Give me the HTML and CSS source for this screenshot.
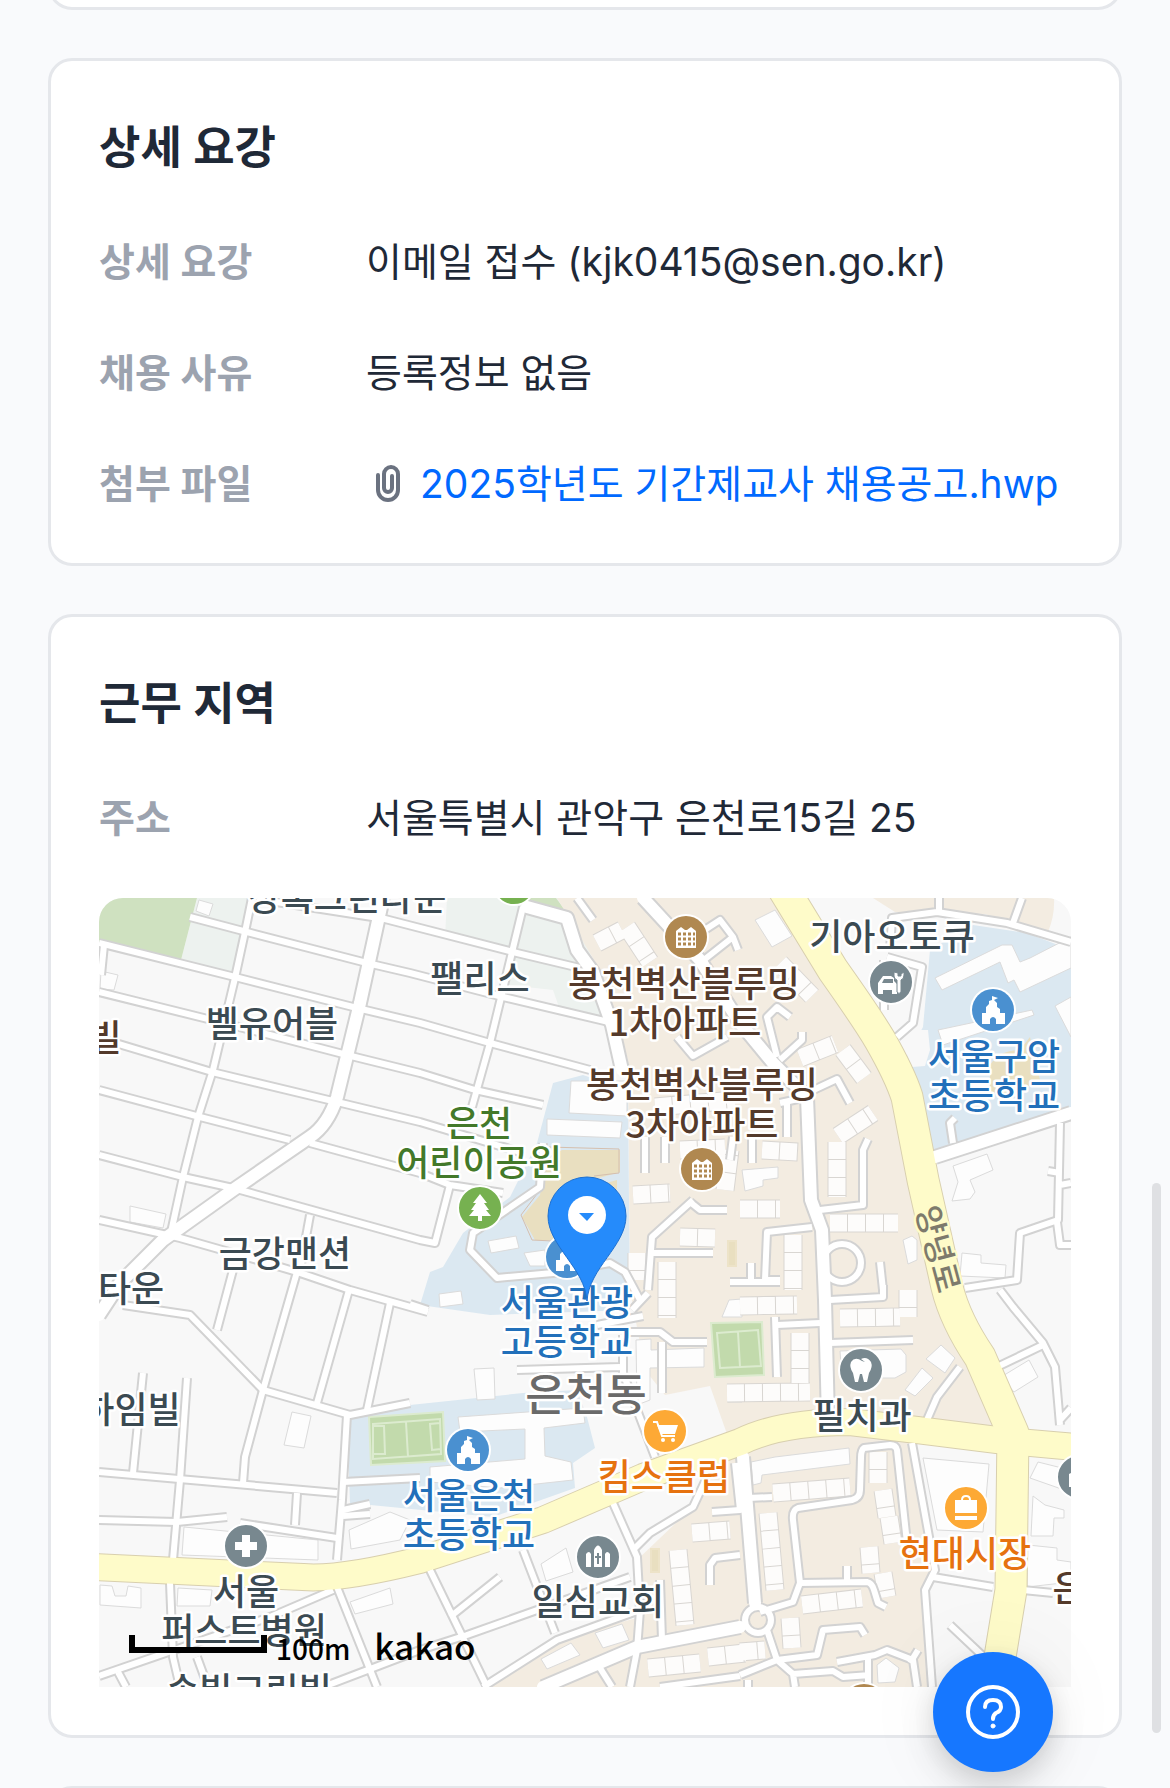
FILE: index.html
```html
<!DOCTYPE html>
<html lang="ko">
<head>
  <meta charset="UTF-8">
  <meta name="viewport" content="width=device-width, initial-scale=1">
  <title>채용 공고</title>
  <link rel="stylesheet" href="styles.css">
</head>
<body>
  <main class="page">
    <section class="card card-prev"></section>

    <section class="card">
      <h2>상세 요강</h2>
      <dl>
        <div class="row">
          <dt>상세 요강</dt>
          <dd>이메일 접수 (kjk0415@sen.go.kr)</dd>
        </div>
        <div class="row">
          <dt>채용 사유</dt>
          <dd>등록정보 없음</dd>
        </div>
        <div class="row">
          <dt>첨부 파일</dt>
          <dd class="file">
            <svg class="clip" viewBox="0 0 24 37" aria-hidden="true">
              <path d="M2 10V25a10 10 0 0 0 20 0V9a7 7 0 0 0-14 0V23a4 4 0 0 0 8 0V11"/>
            </svg>
            <a href="#file">2025학년도 기간제교사 채용공고.hwp</a>
          </dd>
        </div>
      </dl>
    </section>

    <section class="card">
      <h2>근무 지역</h2>
      <dl>
        <div class="row">
          <dt>주소</dt>
          <dd>서울특별시 관악구 은천로15길 25</dd>
        </div>
      </dl>
      <div class="map">
        <svg class="map-canvas" viewBox="99 898 972 789" preserveAspectRatio="xMidYMid slice" role="img" aria-label="지도">
          <defs>
            <!-- residential lanes -->
            <g id="lanes">
              <path d="M257 899L385 919 420 928 517 953 580 968"/>
              <path d="M190 917L247 932 367 963 410 973 503 997 613 1023"/>
              <path d="M99 943L235 977 357 1008 420 1023 490 1043 590 1070"/>
              <path d="M99 992L220 1022 347 1055 420 1073 475 1090 543 1105"/>
              <path d="M99 1038L212 1072 337 1102 420 1122 523 1153"/>
              <path d="M99 1090L200 1117 290 1140M310 1143L420 1173 450 1185 503 1193"/>
              <path d="M99 1155L183 1177 233 1188 420 1240 435 1243 450 1185"/>
              <path d="M99 1220L167 1235 180 1238 257 1260 297 1272 350 1290 428 1312"/>
              <path d="M104 945L101 975"/>
              <path d="M252 898L245 932 235 978 213 1070 198 1117 183 1177 170 1237"/>
              <path d="M523 907L490 1043 472 1107"/>
              <path d="M310 1215L300 1270"/>
              <path d="M123 1305L190 1315 263 1390 350 1415 410 1403"/>
              <path d="M233 1270L217 1330M297 1272L263 1390 245 1457 243 1483"/>
              <path d="M349 1290L317 1403M390 1303L367 1410"/>
              <path d="M347 1415L342 1500 337 1560"/>
              <path d="M187 1378L180 1480 173 1560M143 1373L133 1473"/>
              <path d="M99 1472L337 1493M343 1482L420 1478M99 1520L177 1522 227 1517"/>
              <path d="M240 1523L337 1538M297 1493L295 1525M343 1510L370 1504M343 1516L370 1514"/>
              <path d="M170 1583L173 1657 180 1687M337 1587L377 1687M333 1590L270 1617 99 1676"/>
              <path d="M197 1657L208 1687M118 1672L126 1687M323 1687L420 1650 467 1635 630 1577"/>
              <path d="M430 1570L487 1687M523 1550L555 1633M450 1617L500 1577"/>
              <path d="M483 1687L557 1640 640 1610"/>
              <path d="M543 1143L540 1187 473 1233 470 1250 497 1278 553 1273 610 1263 625 1272 640 1300"/>
              <path d="M410 1304L428 1310M517 1370L620 1367M623 1335L623 1373 655 1457"/>
              <path d="M613 1503L637 1557 640 1610 637 1650 630 1687"/>
              <path d="M633 1550L650 1533 693 1507 707 1477M712 1512L740 1510 735 1463"/>
              <path d="M710 1585L710 1565 715 1558 740 1555M660 1580L662 1640"/>
              <path d="M595 1660L612 1687M660 1687L740 1676"/>
              <path d="M630 1332L660 1332 673 1342 707 1342M662 1342L662 1393M597 1325L643 1316 M632 1310L648 1293"/>
              <path d="M693 1200L652 1237 648 1290M690 1202L700 1210 727 1210M650 1253L713 1253M730 1282L780 1282"/>
              <path d="M677 1037L693 1056 727 1037M700 963L733 937 720 920 700 933M577 898L593 920M733 937L738 950"/>
              <path d="M645 1137L645 1173M665 1137L665 1163M733 1137L730 1160M787 1103L787 1137M752 1137L752 1163M780 1103L807 1097"/>
              <path d="M780 1060L802 1040 802 1032M777 1057L767 1017 777 1007 790 1017M807 1093L837 1079 850 1103"/>
              <path d="M820 1210L863 1205 863 1150 868 1139M812 1227L767 1232 765 1280 780 1280M751 1280L751 1263"/>
              <path d="M830 1343L913 1340M775 1317L777 1377M777 1325L820 1323M830 1300L883 1297 883 1285M880 1262L883 1290"/>
              <circle cx="842" cy="1263" r="19"/>
              <path d="M907 1543L897 1450Q896 1445 890 1445L864 1448Q861 1450 861 1458L860 1490Q860 1498 852 1500L798 1508Q792 1510 793 1520L800 1583 867 1582Q872 1583 874 1590L878 1603 886 1607"/>
              <path d="M800 1583L793 1602 760 1612M847 1582L847 1566M748 1498L772 1497"/>
              <circle cx="758" cy="1620" r="13"/>
              <path d="M767 1630L777 1660 817 1655 823 1630 860 1627 865 1635M777 1660L793 1674 833 1671 843 1677 870 1675M837 1662L875 1655 887 1650 913 1660 917 1687M777 1660L740 1675M868 1657L868 1687M910 1663L918 1650M793 1674L795 1687M748 1680L748 1687"/>
              <path d="M912 1443L935 1570 925 1590 932 1687M933 1577L993 1587M1023 1590L1053 1593M950 1625L987 1660"/>
              <path d="M1060 1123L1058 1220 1020 1233 1017 1280 965 1288M1057 1222L1060 1245 1071 1245M1060 1185L1071 1183M1048 1171L1060 1173"/>
              <path d="M890 950L892 918 937 912 1007 923 1071 942M939 914L939 898M1013 923L1022 898M887 957L922 967 913 1023 897 1037M884 1010L884 960"/>
              <path d="M953 1143L950 1123 955 1118M1000 1290L1013 1307 1043 1343 1055 1367 1060 1425M1043 1345L997 1367M1060 1420L1071 1408M927 1420L937 1397 960 1367"/>
            </g>
            <!-- wider streets -->
            <g id="streets">
              <path d="M383 898L360 1003 337 1097Q328 1125 310 1137L233 1190 163 1240 120 1283 99 1315"/>
              <path d="M527 907L567 918 577 950 593 972 612 1025 622 1070"/>
              <path d="M643 898L700 960 740 1023 773 1063 807 1097 811 1200 822 1230 825 1300 828 1420"/>
              <path d="M935 1157L1071 1113M743 1457L755 1603M543 1687L637 1647 740 1627"/>
            </g>
            <path id="avenue" d="M783 888L833 970Q867 1018 880 1040 900 1075 907 1097L923 1180 947 1287Q955 1320 980 1357L1013 1433 1011 1590 1000 1657 997 1690"/>
            <path id="crossroad" d="M95 1567L303 1577Q340 1580 420 1560L543 1520 643 1477 740 1442Q780 1422 850 1422L917 1430 997 1440 1075 1447"/>
            <!-- terraced houses, split by the dash pattern -->
            <g id="rows">
              <path d="M837 1142L837 1197M838 1136L873 1113M830 1223L898 1223M740 1209L780 1209M793 1235L793 1290"/>
              <path d="M740 1306L797 1305M840 1318L900 1317M800 1333L800 1383M727 1393L810 1392M773 1493L850 1487"/>
              <path d="M878 1452L878 1483M883 1490L887 1517M889 1517L893 1543M768 1513L775 1590M802 1605L862 1598"/>
              <path d="M869 1547L871 1573M883 1573L887 1597M790 1618L792 1648M740 1652L765 1650M692 1533L730 1530"/>
              <path d="M678 1550L685 1625M648 1668L700 1663M708 1657L745 1653M597 943L622 930M627 927L650 962"/>
              <path d="M633 1195L670 1193M680 1237L715 1238M637 1253L637 1280M667 1262L667 1318M800 1058L835 1044"/>
              <path d="M843 1050L864 1078M780 963L812 996M762 1150L798 1152M680 1150L725 1148M655 1107L735 1100M908 1290L908 1317M725 1190L730 1150"/>
            </g>
            <g id="school">
              <circle r="23" fill="#fff"/><circle r="21" fill="#4a90d0"/>
              <path d="M-11 14V3H-7V-3L-4-6V-9L-1-10V-14L5-12 1-10 4-7V-3L7-1V3H12V14H3V9Q0 5-3 9V14Z" fill="#fff"/>
            </g>
            <g id="apt">
              <circle r="23" fill="#fff"/><circle r="21" fill="#b08850"/>
              <path d="M-10 11V-6L-5-10-1-7 1-7 5-10 10-6V11Z" fill="#fff"/>
              <path d="M-8-3H9M-8 2H9M-8 7H9" stroke="#b08850" stroke-width="3" stroke-dasharray="3 2"/>
            </g>
          </defs>

          <rect x="99" y="898" width="972" height="789" fill="#f8f8f8"/>

          <!-- land use -->
          <g class="pale">
            <path d="M197 898H252L235 977 181 960Z"/>
            <path d="M447 898H570L615 1020 560 1010 553 990 508 985 515 955 445 938Z"/>
          </g>
          <path d="M99 898H197L181 960 99 942ZM527 898H556L568 914 530 905Z" fill="#cfe1c0"/>
          <g class="beige">
            <path d="M557 898H785L880 1040 925 1190 990 1370 1005 1430 925 1425 790 1420 727 1434 710 1386 665 1395 645 1370 630 1290 628 1060 600 970Z"/>
            <path d="M740 1442L850 1425 915 1435 935 1570 925 1600 932 1687H487L560 1638 637 1618V1560L700 1500 706 1465Z"/>
            <path d="M873 898H1054Q1055 915 1048 932L985 914 895 912Z"/>
          </g>
          <g class="campus">
            <path d="M553 1083L583 1075 628 1090 630 1310 490 1315 420 1305 430 1272 443 1267 463 1233 510 1197 537 1143Z"/>
            <path d="M347 1417L410 1405 523 1393 577 1390 587 1417 595 1448 573 1463 575 1488 493 1517 350 1503Z"/>
            <path d="M930 950L973 925 1027 933 1071 950V1110L932 1150 920 1097 903 1063 923 1027Z"/>
          </g>
          <path d="M903 1045L915 1030 928 1030 930 1050 925 1066 912 1067Z" fill="#f8f8f8"/>

          <!-- sports grounds -->
          <path d="M562 1150H620V1172L592 1180V1187L617 1180V1240H535L522 1217 540 1195 545 1160Z" fill="#e9dfc0"/>
          <path d="M548 1147L619 1149V1173L594 1176M540 1190L521 1215 532 1240 553 1241" class="fence"/>
          <g class="pitch">
            <path d="M369 1417L443 1412 445 1461 371 1465Z"/>
            <path d="M373 1424L440 1419 441 1454 373 1459ZM406 1422L408 1457M373 1426H384L385 1454H374M440 1423L430 1424 432 1450 441 1449"/>
            <path d="M711 1323L762 1322 764 1375 715 1377Z"/>
            <path d="M717 1333L758 1330 761 1366 720 1368ZM738 1332L740 1367"/>
          </g>
          <path d="M990 1065Q1000 1050 1020 1050L1030 1037 1040 1080 1010 1095 990 1092Z" fill="#e9dfc0"/>
          <path d="M651 1549H659V1572H651ZM728 1241H736V1266H728Z" class="court"/>

          <!-- buildings -->
          <g class="buildings">
            <path d="M571 1081H627V1116L569 1113ZM547 1119L622 1122 620 1138 547 1135ZM488 1241L516 1236 519 1248 491 1253ZM524 1253L545 1250V1266H530Z"/>
            <path d="M439 1294L461 1291 463 1304 440 1307ZM474 1369L494 1368 495 1399 477 1400Z"/>
            <path d="M458 1417L583 1408 585 1423 544 1428 545 1456 571 1462 573 1480 500 1488 430 1482 430 1467 525 1459V1429L460 1432Z"/>
            <path d="M636 1340L651 1339V1350L704 1348V1367L650 1368V1400L637 1405Z"/>
            <path d="M292 1412L311 1416 304 1448 284 1445ZM184 1527L318 1540V1560L182 1555ZM349 1530L390 1512 410 1520 400 1540 351 1549Z"/>
            <path d="M130 1206L166 1214 163 1228 130 1222ZM100 1585L112 1586 115 1596H126L128 1586 141 1588V1608L100 1605ZM178 1588L212 1590 210 1606H177ZM350 1602L390 1588 393 1604 355 1614Z"/>
            <path d="M199 900L213 904 209 916 196 911ZM101 971L118 975 114 990 100 989ZM541 1564L566 1548 573 1572 546 1581ZM541 1659L571 1643 580 1655 547 1669ZM595 1633L622 1624 629 1640 603 1648Z"/>
            <path d="M935 978L1002 945 1012 945 1020 962 1030 958 1071 937V968L1020 992 1014 980 1008 983 1000 962 942 990ZM938 1030L1032 1010 1034 1015 943 1045ZM1055 1006L1071 997V1037Z"/>
            <path d="M953 1166L987 1154 993 1170 970 1180 975 1192 970 1199 952 1201 958 1182ZM962 1253L981 1255V1263L1006 1265 1005 1278 960 1276Z"/>
            <path d="M755 920L775 910 792 936 772 947ZM742 1170L778 1167V1178L763 1180V1186L745 1191ZM840 1351L901 1349 906 1355V1372L895 1378 842 1378ZM905 1390L922 1368 933 1378 915 1396ZM926 1359L941 1345 955 1358 945 1373Z"/>
            <path d="M751 1462L775 1457 849 1448 850 1464 762 1475 761 1483 753 1485ZM1001 1377L1029 1360 1038 1377 1014 1392ZM923 1458L989 1464 983 1532 937 1530ZM1033 1496L1045 1505 1064 1510V1518H1054L1053 1536H1031ZM1030 1478L1038 1462 1070 1470V1492ZM1028 1545L1057 1548V1560L1071 1562V1582L1027 1587ZM903 1240L912 1236 917 1240V1260L908 1264Z"/>
            <path d="M729 1300L742 1299V1317H722ZM729 1386L742 1385V1402H728ZM877 1665L886 1658 899 1668 895 1682 878 1683Z"/>
          </g>
          <use href="#rows" class="rows-edge"/>
          <use href="#rows" class="rows-fill"/>

          <!-- roads: casings first, then surfaces -->
          <use href="#lanes" class="casing lane-casing"/>
          <use href="#streets" class="casing street-casing"/>
          <use href="#avenue" class="casing avenue-casing"/>
          <use href="#crossroad" class="casing crossroad-casing"/>
          <use href="#lanes" class="surface lane-surface"/>
          <use href="#streets" class="surface street-surface"/>
          <use href="#avenue" class="surface avenue-surface"/>
          <use href="#crossroad" class="surface crossroad-surface"/>

          <!-- place icons -->
          <use href="#apt" x="686" y="937"/>
          <use href="#apt" x="702" y="1169"/>
          <use href="#apt" x="864" y="1705"/>
          <use href="#school" x="993" y="1010"/>
          <use href="#school" x="468" y="1450"/>
          <use href="#school" x="567" y="1257"/>
          <circle cx="514" cy="884" r="21" class="dot green"/>
          <g transform="translate(480 1208)">
            <circle r="22" class="dot green"/>
            <path d="M0-14L7-5H4L9 2H6L11 8H2V13H-2V8H-11L-6 2H-9L-4-5H-7Z" fill="#fff"/>
          </g>
          <g transform="translate(891 982)">
            <circle r="22" class="dot slate"/>
            <path d="M-13 11V1L-8-6H0L3-4V-1L6 2V12H1V8H-8V12H-13ZM-7-3L-9 1H2V-3Z" fill="#fff" fill-rule="evenodd"/>
            <path d="M3-10V-6Q3-3 6-2V10Q8 13 10 10V-2Q13-3 13-7V-10L10-8V-6H7V-9Z" fill="#fff" stroke="#78888f"/>
          </g>
          <g transform="translate(665 1431)">
            <circle r="22" class="dot orange"/>
            <path d="M-12-9H-8L-3 5H10" fill="none" stroke="#fff" stroke-width="2"/>
            <path d="M-8-6H13L10 3H-4Z" fill="#fff"/>
            <circle cx="-2" cy="9" r="2" fill="#fff"/><circle cx="8" cy="9" r="2" fill="#fff"/>
          </g>
          <g transform="translate(598 1557)">
            <circle r="22" class="dot slate"/>
            <path d="M-4 10V-7Q0-16 4-7V10ZM-12 10V-3Q-9-7-7-3V10ZM7 10V-3Q9-7 12-3V10Z" fill="#fff"/>
            <path d="M0-4V7M-3 0H3" stroke="#78888f" stroke-width="2"/>
          </g>
          <g transform="translate(246 1546)">
            <circle r="22" class="dot slate"/>
            <path d="M-4-11H4V-4H11V4H4V11H-4V4H-11V-4H-4Z" fill="#fff"/>
          </g>
          <g transform="translate(861 1370)">
            <circle r="22" class="dot slate"/>
            <path d="M-10-8Q-6-14 1-9L4-8 0-11Q6-14 10-8 12-3 8 3L6 12H3L1 4H-1L-3 12H-6L-8 3Q-12-3-10-8Z" fill="#fff"/>
          </g>
          <g transform="translate(966 1508)">
            <circle r="22" class="dot orange"/>
            <path d="M-11-8H11V5H-11ZM-11 8H11V12H-11Z" fill="#fff"/>
            <path d="M-4-8Q-4-12 0-12T4-8" fill="none" stroke="#fff" stroke-width="2"/>
          </g>
          <circle cx="1079" cy="1477" r="22" class="dot slate"/>
          <path d="M1069 1474L1080 1468V1487H1069Z" fill="#fff"/>

          <!-- place names -->
          <g class="labels">
            <g class="name">
              <text x="347" y="911">상록그린타운</text>
              <text x="272" y="1037">벨유어블</text>
              <text x="285" y="1267">금강맨션</text>
              <text x="480" y="992">팰리스</text>
              <text x="892" y="950">기아오토큐</text>
              <text x="131" y="1302">타운</text>
              <text x="131" y="1423">하임빌</text>
              <text x="246" y="1605">서울</text>
              <text x="244" y="1644">퍼스트병원</text>
              <text x="249" y="1704">송빌그린빌</text>
              <text x="598" y="1615">일심교회</text>
              <text x="862" y="1429">필치과</text>
            </g>
            <g class="name housing">
              <text x="105" y="1051">빌</text>
              <text x="684" y="997">봉천벽산블루밍</text>
              <text x="685" y="1036">1차아파트</text>
              <text x="702" y="1098">봉천벽산블루밍</text>
              <text x="702" y="1138">3차아파트</text>
              <text x="1069" y="1602">은</text>
            </g>
            <g class="name park">
              <text x="479" y="1137">은천</text>
              <text x="479" y="1176">어린이공원</text>
            </g>
            <g class="name edu">
              <text x="994" y="1070">서울구암</text>
              <text x="994" y="1109">초등학교</text>
              <text x="567" y="1316">서울관광</text>
              <text x="567" y="1355">고등학교</text>
              <text x="469" y="1509">서울은천</text>
              <text x="469" y="1548">초등학교</text>
            </g>
            <g class="name shop">
              <text x="664" y="1490">킴스클럽</text>
              <text x="965" y="1567">현대시장</text>
            </g>
            <text x="586" y="1411" class="district">은천동</text>
            <text transform="translate(927 1252) rotate(75)" class="road-name">양녕로</text>
          </g>

          <!-- marker -->
          <path d="M587 1301C585 1268 548 1246 548 1216A39 39 0 0 1 626 1216C626 1246 589 1268 587 1301Z" fill="#258bfb" stroke="#1c70d2"/>
          <circle cx="587" cy="1215" r="19" fill="#fff"/>
          <path d="M579 1213H594L587 1221Z" fill="#258bfb"/>
        </svg>
        <div class="map-legend">
          <span class="scale"></span>
          <span class="distance">100m</span>
          <span class="brand">kakao</span>
        </div>
      </div>
    </section>

    <section class="card"></section>
  </main>

  <div class="scroll-thumb"></div>
  <button class="help" type="button" aria-label="도움말">
    <svg viewBox="0 0 54 54" aria-hidden="true">
      <circle cx="27" cy="27" r="25"/>
      <path d="M19 22Q19 15 27 15T35 22Q35 26 30 28 27 30 27 34"/>
      <circle cx="27" cy="41" r="2" class="point"/>
    </svg>
  </button>
</body>
</html>
```
FILE: styles.css
```css
* {
  box-sizing: border-box;
}
body {
  margin: 0;
  background: #f9fafc;
  color: #1f2937;
  font-family: Inter, "Noto Sans CJK KR", sans-serif;
}
.page {
  display: flex;
  flex-direction: column;
  gap: 48px;
  height: 100vh;
  padding: 0 48px;
  overflow: hidden;
}
.card {
  flex-shrink: 0;
  padding: 48px;
  background: #fff;
  border: 3px solid #e5e7eb;
  border-radius: 24px;
}
.card-prev {
  height: 60px;
  margin-top: -50px;
  padding: 0;
}
h2 {
  margin: 0 0 44px;
  font-size: 45px;
  font-weight: 600;
  line-height: 77px;
}
dl {
  display: flex;
  flex-direction: column;
  gap: 48px;
  margin: 0;
}
.row {
  display: grid;
  grid-template-columns: 267px 1fr;
  font-size: 39px;
  line-height: 63px;
}
dt {
  color: #9ca3af;
  font-weight: 600;
}
dd {
  margin: 0;
  white-space: nowrap;
}
.file {
  display: flex;
  align-items: center;
  gap: 20px;
  padding-left: 10px;
}
.file a {
  color: #0069ff;
  text-decoration: none;
}
.clip {
  width: 24px;
  height: 37px;
  fill: none;
  stroke: #6b7280;
  stroke-width: 4;
  stroke-linecap: round;
}

/* map */
.map {
  position: relative;
  height: 789px;
  margin-top: 49px;
  border-radius: 24px 24px 0 0;
  overflow: hidden;
}
.map-canvas {
  display: block;
  width: 100%;
  height: 100%;
}
.pale {
  fill: #edf2ef;
}
.beige {
  fill: #f3ece1;
}
.campus {
  fill: #dbe8f1;
}
.fence {
  fill: none;
  stroke: #d5bfae;
}
.pitch {
  fill: #c2daac;
  stroke: #dcebcf;
  stroke-width: 2;
}
.court {
  fill: #e9dfc0;
  stroke: #ede3c8;
  stroke-width: 2;
}
.buildings {
  fill: #fdfdfd;
  stroke: #dbdbdb;
}
.rows-edge {
  fill: none;
  stroke: #d9d6d2;
  stroke-width: 19;
}
.rows-fill {
  fill: none;
  stroke: #fdfcfb;
  stroke-width: 17;
  stroke-dasharray: 17 1;
}
.casing {
  fill: none;
  stroke: #d2d2d2;
  stroke-linejoin: round;
}
.surface {
  fill: none;
  stroke: #fff;
  stroke-linejoin: round;
  stroke-linecap: round;
}
.lane-casing {
  stroke-width: 10;
}
.lane-surface {
  stroke-width: 6;
  stroke-linecap: butt;
}
.street-casing {
  stroke-width: 16;
}
.street-surface {
  stroke-width: 12;
}
.avenue-casing {
  stroke: #d8cfae;
  stroke-width: 33;
}
.avenue-surface {
  stroke: #fefbc9;
  stroke-width: 31;
}
.crossroad-casing {
  stroke: #d8cfae;
  stroke-width: 28;
}
.crossroad-surface {
  stroke: #fefbc9;
  stroke-width: 26;
}
.dot {
  stroke: #fff;
  stroke-width: 2;
}
.green {
  fill: #76b150;
}
.slate {
  fill: #78888f;
}
.orange {
  fill: #fda935;
}
.labels {
  font-family: "Noto Sans CJK KR", sans-serif;
  font-weight: 500;
  text-anchor: middle;
  paint-order: stroke;
  stroke: #fff;
  stroke-width: 5;
  stroke-linejoin: round;
}
.name {
  font-size: 36px;
  fill: #3b4a52;
}
.housing {
  fill: #543a2b;
}
.park {
  fill: #43792a;
}
.edu {
  fill: #2270ba;
}
.shop {
  fill: #e6720f;
}
.district {
  font-size: 44px;
  fill: #6a6a6a;
}
.road-name {
  font-size: 32px;
  fill: #7d7a6c;
  stroke: #fefbc9;
}
.map-legend {
  position: absolute;
  left: 30px;
  bottom: 21px;
  display: flex;
  align-items: flex-end;
  color: #000;
  font-family: "Noto Sans CJK KR", sans-serif;
  font-weight: 500;
}
.scale {
  width: 138px;
  height: 18px;
  margin-bottom: 13px;
  border: 6px solid #000;
  border-top: 0;
}
.distance {
  margin-left: 9px;
  font-size: 28px;
  line-height: 36px;
}
.brand {
  margin-left: 24px;
  font-size: 35px;
  line-height: 42px;
}

.scroll-thumb {
  position: fixed;
  top: 1183px;
  right: 9px;
  width: 9px;
  height: 550px;
  background: #dfe0e3;
  border-radius: 5px;
}
.help {
  position: fixed;
  right: 117px;
  bottom: 16px;
  display: flex;
  align-items: center;
  justify-content: center;
  width: 120px;
  height: 120px;
  padding: 0;
  background: #1677ff;
  border: 0;
  border-radius: 50%;
  box-shadow: 0 18px 48px rgba(0, 0, 0, 0.1), 0 9px 27px rgba(0, 0, 0, 0.1), 0 0 90px rgba(0, 0, 0, 0.05);
}
.help svg {
  width: 54px;
  height: 54px;
  fill: none;
  stroke: #fff;
  stroke-width: 4;
  stroke-linecap: round;
}
.help .point {
  fill: #fff;
  stroke-width: 1;
}
```
